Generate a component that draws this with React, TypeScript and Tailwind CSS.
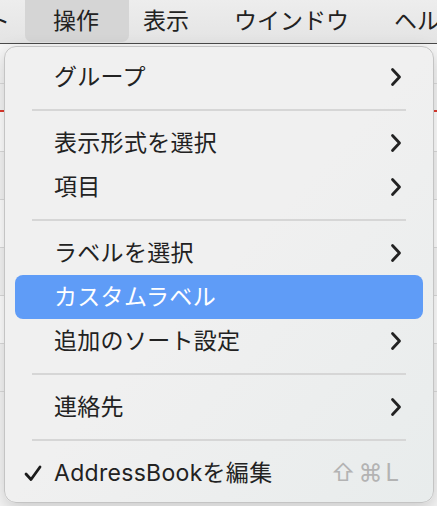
import React from "react";

type Item =
  | { kind: "item"; label: string; sub?: boolean; active?: boolean; checked?: boolean; shortcut?: string }
  | { kind: "sep" };

const items: Item[] = [
  { kind: "item", label: "グループ", sub: true },
  { kind: "sep" },
  { kind: "item", label: "表示形式を選択", sub: true },
  { kind: "item", label: "項目", sub: true },
  { kind: "sep" },
  { kind: "item", label: "ラベルを選択", sub: true },
  { kind: "item", label: "カスタムラベル", active: true },
  { kind: "item", label: "追加のソート設定", sub: true },
  { kind: "sep" },
  { kind: "item", label: "連絡先", sub: true },
  { kind: "sep" },
  { kind: "item", label: "AddressBookを編集", checked: true, shortcut: "⇧⌘L" },
];

const Chevron = () => (
  <svg width="12" height="20" viewBox="0 0 12 20" fill="none">
    <path d="M2.5 2.5 L9.5 10 L2.5 17.5" stroke="#222" strokeWidth="2.8" strokeLinecap="round" strokeLinejoin="round" />
  </svg>
);

const Check = () => (
  <svg width="18" height="17" viewBox="0 0 18 17" fill="none">
    <path d="M2 9 L7 14.5 L16 2" stroke="#1c1c1c" strokeWidth="2.8" strokeLinecap="round" strokeLinejoin="round" />
  </svg>
);

const MenuRow = ({ item }: { item: Extract<Item, { kind: "item" }> }) => (
  <div
    className={`mx-[10px] h-[44px] flex items-center rounded-[8px] pr-[21px] ${
      item.active ? "bg-[#5f9cf7] text-white" : "text-[#222]"
    }`}
  >
    <div className="w-[39px] pl-[9px] flex items-center">{item.checked && <Check />}</div>
    <span className="flex-1 text-[23px] leading-none tracking-[0.3px]">{item.label}</span>
    {item.sub && <Chevron />}
    {item.shortcut && (
      <span className="text-[24px] leading-none text-[#b3b3b3] tracking-[3px]">{item.shortcut}</span>
    )}
  </div>
);

export default function App() {
  return (
    <div
      className="relative w-[437px] h-[506px] overflow-hidden bg-[#f6f6f6]"
      style={{ fontFamily: 'Inter, "Noto Sans CJK JP", sans-serif' }}
    >
      {/* menu bar */}
      <div className="h-[44px] flex items-stretch whitespace-nowrap bg-gradient-to-b from-[#ededed] to-[#e4e4e4] border-b border-[#4a4a4a] text-[#222] text-[23px]">
        <div className="w-[25px] shrink-0 overflow-hidden flex items-center">
          <span className="ml-[-13px]">ト</span>
        </div>
        <div className="w-[104px] shrink-0 h-[42px] rounded-b-[7px] bg-[#d5d5d5] flex items-center pl-[28px]">操作</div>
        <div className="shrink-0 flex items-center pl-[14px]">表示</div>
        <div className="shrink-0 flex items-center pl-[45px]">ウインドウ</div>
        <div className="shrink-0 flex items-center pl-[45px]">ヘルプ</div>
      </div>

      {/* background window content */}
      <div className="flex flex-col">
        <div className="h-[40px] border-b border-[#dcdcdc]" />
        <div className="h-[28px] border-b-2 border-[#e03a2f]" />
        <div className="h-[40px] border-b border-[#dcdcdc] bg-white" />
        <div className="h-[48px] border-b border-[#dcdcdc]" />
        <div className="h-[48px] border-b border-[#dcdcdc] bg-white" />
        <div className="h-[48px] border-b border-[#dcdcdc]" />
        <div className="h-[48px] border-b border-[#dcdcdc] bg-white" />
        <div className="h-[48px] border-b border-[#dcdcdc]" />
      </div>

      {/* dropdown menu */}
      <div className="absolute left-[4px] top-[46px] w-[430px] h-[457px] rounded-[12px] border border-[#c4c4c4] bg-gradient-to-br from-[#f0f0f0] via-[#f0f0f0] to-[#e8ecec] shadow-[0_6px_18px_rgba(0,0,0,0.18)] pt-[8px] pb-[7px] flex flex-col">
        {items.map((it, i) =>
          it.kind === "sep" ? (
            <div key={i} className="h-[22px] flex items-center mx-[27px]">
              <div className="h-[2px] w-full bg-[#d6d6d6]" />
            </div>
          ) : (
            <MenuRow key={i} item={it} />
          )
        )}
      </div>
    </div>
  );
}
